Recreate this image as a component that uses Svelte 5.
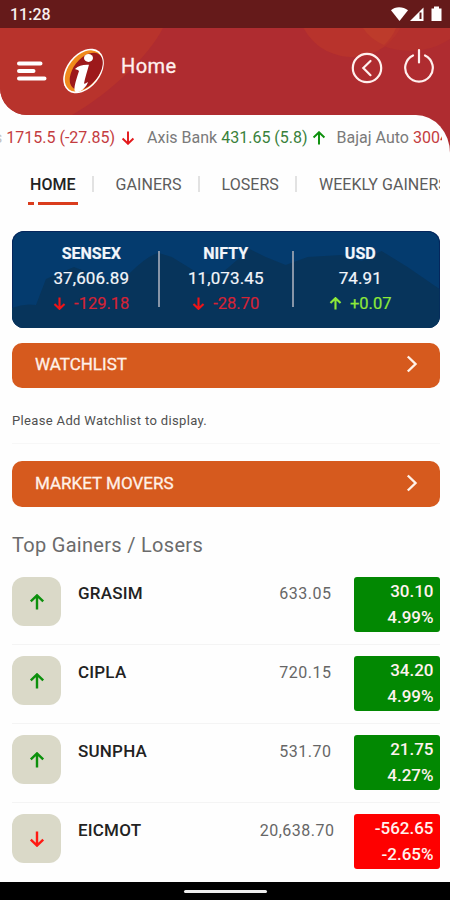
<script lang="ts">
  type Quote = { name: string; price: string; change: string; up: boolean };

  const ticker = [
    { name: 's', text: '1715.5 (-27.85)', up: false },
    { name: 'Axis Bank', text: '431.65 (5.8)', up: true },
    { name: 'Bajaj Auto', text: '3004.2 (-21.4)', up: false },
  ];

  const tabs = ['HOME', 'GAINERS', 'LOSERS', 'WEEKLY GAINERS'];

  const indices: Quote[] = [
    { name: 'SENSEX', price: '37,606.89', change: '-129.18', up: false },
    { name: 'NIFTY', price: '11,073.45', change: '-28.70', up: false },
    { name: 'USD', price: '74.91', change: '+0.07', up: true },
  ];

  const movers: (Quote & { percent: string })[] = [
    { name: 'GRASIM', price: '633.05', change: '30.10', percent: '4.99%', up: true },
    { name: 'CIPLA', price: '720.15', change: '34.20', percent: '4.99%', up: true },
    { name: 'SUNPHA', price: '531.70', change: '21.75', percent: '4.27%', up: true },
    { name: 'EICMOT', price: '20,638.70', change: '-562.65', percent: '-2.65%', up: false },
  ];

  let active = $state('HOME');
</script>

{#snippet arrow(up: boolean, size: number)}
  <svg class="arrow" class:flip={!up} width={size} height={size} viewBox="0 0 16 16">
    <path d="M8 15.5V1.5M1.8 7.4L8 1.4l6.2 6" />
  </svg>
{/snippet}

{#snippet sectionBar(title: string)}
  <button class="bar">
    <span>{title}</span>
    <svg width="12" height="18" viewBox="0 0 12 18"><path d="M1.8 1.5L9.5 9l-7.7 7.5" /></svg>
  </button>
{/snippet}

<div class="app">
  <div class="status">
    <span>11:28</span>
    <svg width="54" height="18" viewBox="0 0 54 18">
      <path d="M3 4.200C7 .2 15 .2 20 4.200L11.500 15z" />
      <path d="M35.500 1.500V15H22z" />
      <path class="signal" d="M32.500 6.500V13" />
      <path d="M43.500 2.500h2.500V.5h5v2h2.500v12.500h-10z" />
    </svg>
  </div>

  <header>
    <svg class="shade" viewBox="0 0 450 87" preserveAspectRatio="none">
      <path fill="#b8332c" d="M0 0H163C147 30 111 64 72 87H0z" />
      <circle fill="#b4302d" cx="410" cy="-50" r="73" />
      <circle fill="#b8332c" cx="352" cy="-26" r="55" />
      <path fill="#bd3b2b" d="M363 0H396Q392 10 384 17Q370 11 363 0z" />
    </svg>
    <svg class="menu" width="30" height="20" viewBox="0 0 30 20">
      <path d="M2 2.500H23.500M2 10H16.500M2 17.500H27.500" />
    </svg>
    <svg class="logo" width="46" height="50" viewBox="0 0 46 50">
      <g transform="rotate(38 22.500 25)">
        <ellipse cx="22.500" cy="25" rx="16.800" ry="25" fill="#fff" />
        <ellipse cx="22.500" cy="25" rx="15.200" ry="23.400" fill="#f08a1c" />
        <ellipse cx="24.800" cy="23.500" rx="12.800" ry="21.300" fill="#9d191b" />
      </g>
      <ellipse cx="27.500" cy="12" rx="4.500" ry="3.900" fill="#fff" />
      <path fill="#fff" d="M14 23C17.500 19.500 22 18.500 28 18.800C26 26 24 32 23 37.500C24 38 25.500 37 27 36C25.500 40.500 21 45.500 16 46.300C11 46.300 14.500 36 18 25C17 24 15.500 23.500 14 23z" />
    </svg>
    <h1>Home</h1>
    <svg class="back" width="32" height="32" viewBox="0 0 32 32">
      <circle cx="16" cy="16" r="14.200" />
      <path d="M19.500 9L12.300 16l7.200 7.200" />
    </svg>
    <svg class="power" width="32" height="36" viewBox="0 0 32 36">
      <path d="M10 8.400A13.800 13.800 0 1 0 22 8.400M16 3V15.500" />
    </svg>
  </header>

  <div class="ticker-wrap">
    <div class="ticker">
      <div class="tape">
        {#each ticker as item (item.name)}
          <span class="tick" class:up={item.up}>
            <span class="name">{item.name}</span>
            <span class="value">{item.text}</span>
            {@render arrow(item.up, 14)}
          </span>
        {/each}
      </div>
    </div>
  </div>

  <nav>
    {#each tabs as tab (tab)}
      <button class:active={tab === active} onclick={() => (active = tab)}>{tab}</button>
    {/each}
  </nav>

  <main>
    <section class="indices">
      <svg class="hills" viewBox="0 0 428 97" preserveAspectRatio="none">
        <path d="M0 77Q12 72 24 74L34 48L62 36L78 42L92 50L117 43Q136 24 147 22L160 26L186 42L208 44L238 18L254 26L274 34L296 26L330 24L350 30L370 20L396 36L428 58V97H0z" />
      </svg>
      {#each indices as item (item.name)}
        <div class="index" class:up={item.up}>
          <b>{item.name}</b>
          <span class="level">{item.price}</span>
          <span class="change">{@render arrow(item.up, 13)}{item.change}</span>
        </div>
      {/each}
    </section>

    {@render sectionBar('WATCHLIST')}
    <p class="empty">Please Add Watchlist to display.</p>
    {@render sectionBar('MARKET MOVERS')}

    <h2>Top Gainers / Losers</h2>
    {#each movers as item (item.name)}
      <div class="row" class:up={item.up}>
        <div class="tile">{@render arrow(item.up, 16)}</div>
        <b class="symbol">{item.name}</b>
        <span class="price" class:long={item.price.length > 6}>{item.price}</span>
        <div class="badge">
          <span>{item.change}</span>
          <span>{item.percent}</span>
        </div>
      </div>
    {/each}
  </main>

  <div class="gesture"><i></i></div>
</div>

<style>
  :global(body) {
    margin: 0;
  }
  .app {
    display: flex;
    flex-direction: column;
    width: 450px;
    height: 900px;
    overflow: hidden;
    background: #fefefe;
    font-family: Roboto, 'Liberation Sans', sans-serif;
    color: #555;
  }
  .app * {
    box-sizing: border-box;
  }
  svg {
    display: block;
    flex: none;
  }
  button {
    border: none;
    background: none;
    padding: 0;
    font: inherit;
    cursor: pointer;
  }
  .arrow {
    fill: none;
    stroke: #e3191c;
    stroke-width: 2.2;
  }
  .up .arrow {
    stroke: #0c900c;
  }
  .flip {
    transform: rotate(180deg);
  }
  .status {
    flex: none;
    display: flex;
    justify-content: space-between;
    align-items: center;
    height: 28px;
    padding: 1px 8px 0 10px;
    background: #651a1a;
    color: #f8eeee;
    font-size: 16px;
    font-weight: 500;
  }
  .status svg {
    fill: #fff;
  }
  .status .signal {
    stroke: #651a1a;
    stroke-width: 2;
  }
  header {
    position: relative;
    flex: none;
    display: flex;
    height: 87px;
    overflow: hidden;
    background: #af2c30;
    border-bottom-left-radius: 27px;
  }
  header svg {
    position: relative;
    fill: none;
    stroke: #fff0ee;
    stroke-width: 2.2;
    stroke-linecap: round;
  }
  header .shade {
    position: absolute;
    inset: 0;
    width: 100%;
    height: 100%;
    stroke: none;
  }
  header .menu {
    margin: 33px 0 0 17px;
    stroke-width: 4;
    stroke: #fff;
  }
  header .logo {
    margin: 18px 0 0 14px;
    stroke: none;
  }
  h1 {
    position: relative;
    flex: 1;
    margin: 26px 0 0 14px;
    font-size: 20px;
    line-height: 24px;
    font-weight: 400;
    letter-spacing: 0.4px;
    color: #fff0ee;
    -webkit-text-stroke: 0.3px #fff0ee;
  }
  header .back {
    margin-top: 24px;
  }
  header .power {
    margin: 19px 15px 0 20px;
  }
  .ticker-wrap {
    flex: none;
    background: #af2c30;
  }
  .ticker {
    height: 45px;
    padding: 12px 8px 0 0;
    background: #fefefe;
    border-top-right-radius: 34px 38px;
  }
  .tape {
    display: flex;
    gap: 11px;
    overflow: hidden;
    white-space: nowrap;
    font-size: 16px;
    line-height: 22px;
  }
  .tick {
    display: flex;
    align-items: center;
    gap: 4px;
    flex: none;
  }
  .tick:first-child {
    margin-left: -6px;
  }
  .tick:first-child .arrow {
    margin: 0 1px 0 2px;
  }
  .tick .name {
    color: #7a7a7a;
  }
  .tick:first-child .name {
    color: #c4c4c4;
  }
  .tick .value {
    color: #c43c40;
  }
  .tick.up .value {
    color: #39813b;
  }
  nav {
    flex: none;
    display: flex;
    width: 440px;
    height: 71px;
    padding-left: 30px;
    overflow: hidden;
  }
  nav button {
    position: relative;
    flex: none;
    height: 48px;
    margin-right: 40px;
    font-size: 16px;
    letter-spacing: 0.05px;
    white-space: nowrap;
    color: #5c5c5c;
  }
  nav button:not(:last-child)::after {
    content: '';
    position: absolute;
    right: -18px;
    top: 16px;
    width: 1.500px;
    height: 16px;
    background: #e2e2e2;
  }
  nav .active {
    font-weight: 500;
    color: #222;
  }
  nav .active::before {
    content: '';
    position: absolute;
    left: -2px;
    right: -2px;
    top: 42px;
    height: 3px;
    background: linear-gradient(90deg, #da3c1d 6px, transparent 6px 10px, #da3c1d 10px);
  }
  main {
    flex: 1;
    min-height: 0;
    padding: 0 10.500px 0 12px;
    overflow: hidden;
  }
  .indices {
    position: relative;
    display: flex;
    height: 97px;
    overflow: hidden;
    padding: 0 12px;
    background: #043b6e;
    border-radius: 12px;
    box-shadow: inset 0 0 0 1px #06265c;
  }
  .hills {
    position: absolute;
    inset: 0;
    width: 100%;
    height: 100%;
    fill: #07345b;
  }
  .index {
    position: relative;
    flex: 1;
    display: flex;
    flex-direction: column;
    align-items: center;
    padding-top: 10px;
    font-size: 16px;
    line-height: 25px;
    color: #f3f6fb;
    -webkit-text-stroke: 0.2px;
  }
  .index b {
    font-weight: 700;
  }
  .index .level {
    font-size: 17px;
    letter-spacing: 0.1px;
  }
  .index + .index::before {
    content: '';
    position: absolute;
    left: -1px;
    top: 20px;
    width: 2px;
    height: 56px;
    background: #8795a8;
  }
  .index .change {
    display: flex;
    align-items: center;
    gap: 8px;
    font-size: 16.500px;
    color: #d42336;
  }
  .index .arrow {
    stroke: #ee1418;
    stroke-width: 2.6;
  }
  .index.up .change {
    color: #8eea39;
  }
  .index.up .arrow {
    stroke: #8eea39;
  }
  .bar {
    display: flex;
    justify-content: space-between;
    align-items: center;
    width: 100%;
    height: 45px;
    margin-top: 15px;
    padding: 0 22px 3px 23px;
    background: #d65a1e;
    border-radius: 10px;
    color: #fff1e8;
    font-size: 17px;
    -webkit-text-stroke: 0.3px;
  }
  .bar svg {
    fill: none;
    stroke: #fff1e8;
    stroke-width: 2.4;
  }
  .empty {
    margin: 0;
    height: 56px;
    padding-top: 23px;
    border-bottom: 1px solid #f7f7f7;
    font-size: 13px;
    line-height: 20px;
    letter-spacing: 0.35px;
    color: #505050;
  }
  .empty + .bar {
    height: 46px;
    margin-top: 17px;
  }
  h2 {
    height: 59px;
    margin: 0;
    padding-top: 25px;
    font-size: 20px;
    line-height: 26px;
    font-weight: 400;
    letter-spacing: 0.3px;
    color: #6b6b6b;
  }
  .row {
    display: flex;
    align-items: flex-start;
    height: 79px;
    padding-top: 11px;
    border-bottom: 1px solid #f4f4f4;
  }
  .row:last-child {
    border-bottom: none;
  }
  .tile {
    display: flex;
    align-items: center;
    justify-content: center;
    width: 49px;
    height: 49px;
    margin-right: 17px;
    background: #dad9c8;
    border-radius: 12px;
  }
  .row .arrow {
    stroke: #ff1a14;
    stroke-width: 2.4;
  }
  .row.up .arrow {
    stroke: #0c900c;
  }
  .symbol {
    flex: 1;
    margin-top: 5px;
    font-size: 17px;
    line-height: 22px;
    font-weight: 500;
    letter-spacing: 0.2px;
    color: #222;
  }
  .price {
    margin: 6px 22px 0 0;
    font-size: 16px;
    line-height: 22px;
    letter-spacing: 0.5px;
    color: #666;
  }
  .price.long {
    margin-right: 19px;
  }
  .badge {
    display: flex;
    flex-direction: column;
    align-items: flex-end;
    width: 86px;
    height: 55px;
    padding: 1px 6px 0 0;
    background: #fe0000;
    border-radius: 3px;
    color: #fff2ee;
    font-size: 17px;
    line-height: 26px;
    font-weight: 500;
  }
  .up .badge {
    background: #028802;
  }
  .gesture {
    flex: none;
    display: flex;
    justify-content: center;
    height: 18px;
    padding-top: 8px;
    background: #000;
  }
  .gesture i {
    width: 83px;
    height: 3px;
    background: #eee;
    border-radius: 2px;
  }
</style>
